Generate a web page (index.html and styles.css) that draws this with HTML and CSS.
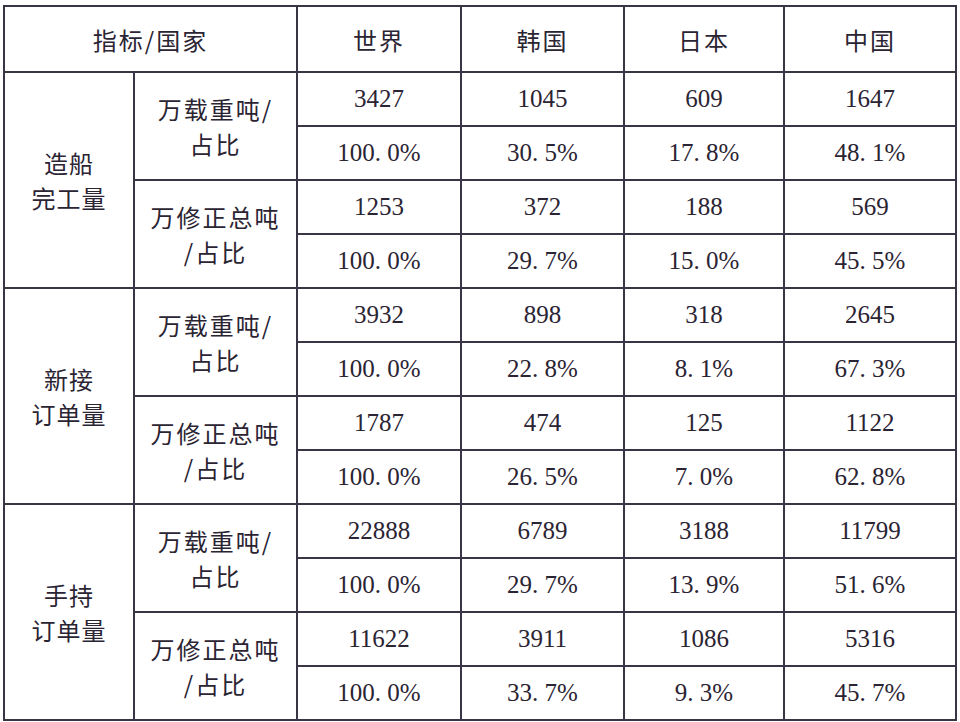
FILE: index.html
```html
<!DOCTYPE html>
<html lang="zh-CN">
<head>
<meta charset="utf-8">
<title>造船三大指标</title>
<link rel="stylesheet" href="styles.css">
</head>
<body>
<table class="stats">
  <colgroup>
    <col class="c-cat"><col class="c-unit"><col class="c-w"><col class="c-k"><col class="c-j"><col class="c-c">
  </colgroup>
  <thead>
    <tr class="head">
      <th colspan="2" class="cjk">指标/国家</th>
      <th class="cjk">世界</th>
      <th class="cjk">韩国</th>
      <th class="cjk">日本</th>
      <th class="cjk">中国</th>
    </tr>
  </thead>
  <tbody>
    <tr>
      <td rowspan="4" class="cjk cat">造船<br>完工量</td>
      <td rowspan="2" class="cjk unit">万载重吨/<br>占比</td>
      <td class="num">3427</td><td class="num">1045</td><td class="num">609</td><td class="num">1647</td>
    </tr>
    <tr>
      <td class="num">100<span class="pt">.</span>0%</td><td class="num">30<span class="pt">.</span>5%</td><td class="num">17<span class="pt">.</span>8%</td><td class="num">48<span class="pt">.</span>1%</td>
    </tr>
    <tr>
      <td rowspan="2" class="cjk unit">万修正总吨<br>/占比</td>
      <td class="num">1253</td><td class="num">372</td><td class="num">188</td><td class="num">569</td>
    </tr>
    <tr>
      <td class="num">100<span class="pt">.</span>0%</td><td class="num">29<span class="pt">.</span>7%</td><td class="num">15<span class="pt">.</span>0%</td><td class="num">45<span class="pt">.</span>5%</td>
    </tr>

    <tr>
      <td rowspan="4" class="cjk cat">新接<br>订单量</td>
      <td rowspan="2" class="cjk unit">万载重吨/<br>占比</td>
      <td class="num">3932</td><td class="num">898</td><td class="num">318</td><td class="num">2645</td>
    </tr>
    <tr>
      <td class="num">100<span class="pt">.</span>0%</td><td class="num">22<span class="pt">.</span>8%</td><td class="num">8<span class="pt">.</span>1%</td><td class="num">67<span class="pt">.</span>3%</td>
    </tr>
    <tr>
      <td rowspan="2" class="cjk unit">万修正总吨<br>/占比</td>
      <td class="num">1787</td><td class="num">474</td><td class="num">125</td><td class="num">1122</td>
    </tr>
    <tr>
      <td class="num">100<span class="pt">.</span>0%</td><td class="num">26<span class="pt">.</span>5%</td><td class="num">7<span class="pt">.</span>0%</td><td class="num">62<span class="pt">.</span>8%</td>
    </tr>

    <tr>
      <td rowspan="4" class="cjk cat">手持<br>订单量</td>
      <td rowspan="2" class="cjk unit">万载重吨/<br>占比</td>
      <td class="num">22888</td><td class="num">6789</td><td class="num">3188</td><td class="num">11799</td>
    </tr>
    <tr>
      <td class="num">100<span class="pt">.</span>0%</td><td class="num">29<span class="pt">.</span>7%</td><td class="num">13<span class="pt">.</span>9%</td><td class="num">51<span class="pt">.</span>6%</td>
    </tr>
    <tr>
      <td rowspan="2" class="cjk unit">万修正总吨<br>/占比</td>
      <td class="num">11622</td><td class="num">3911</td><td class="num">1086</td><td class="num">5316</td>
    </tr>
    <tr>
      <td class="num">100<span class="pt">.</span>0%</td><td class="num">33<span class="pt">.</span>7%</td><td class="num">9<span class="pt">.</span>3%</td><td class="num">45<span class="pt">.</span>7%</td>
    </tr>
  </tbody>
</table>
</body>
</html>
```

FILE: styles.css
```css
html, body {
  margin: 0;
  padding: 0;
  background: #ffffff;
}

body {
  padding: 5px 0 0 3px;
}

.stats {
  border-collapse: collapse;
  table-layout: fixed;
  width: 952px;
  color: #2b2433;
  border: 2px solid #3a3544;
}

.c-cat { width: 130px; }
.c-unit { width: 163px; }
.c-w { width: 164px; }
.c-k { width: 163px; }
.c-j { width: 160px; }
.c-c { width: 172px; }

.stats th,
.stats td {
  border: 2px solid #3a3544;
  padding: 0;
  text-align: center;
  vertical-align: middle;
  font-weight: normal;
}

.stats tr {
  height: 54px;
}

.stats tr.head {
  height: 66px;
}

.cjk {
  font-family: "Noto Sans CJK SC", sans-serif;
  font-size: 24px;
  font-weight: 300;
  letter-spacing: 2px;
  line-height: 35px;
}

.cat {
  letter-spacing: 1px;
}

.num {
  font-family: "Liberation Serif", serif;
  font-size: 25px;
  line-height: 30px;
}

.pt {
  display: inline-block;
  width: 0.5em;
  text-align: left;
}
```
